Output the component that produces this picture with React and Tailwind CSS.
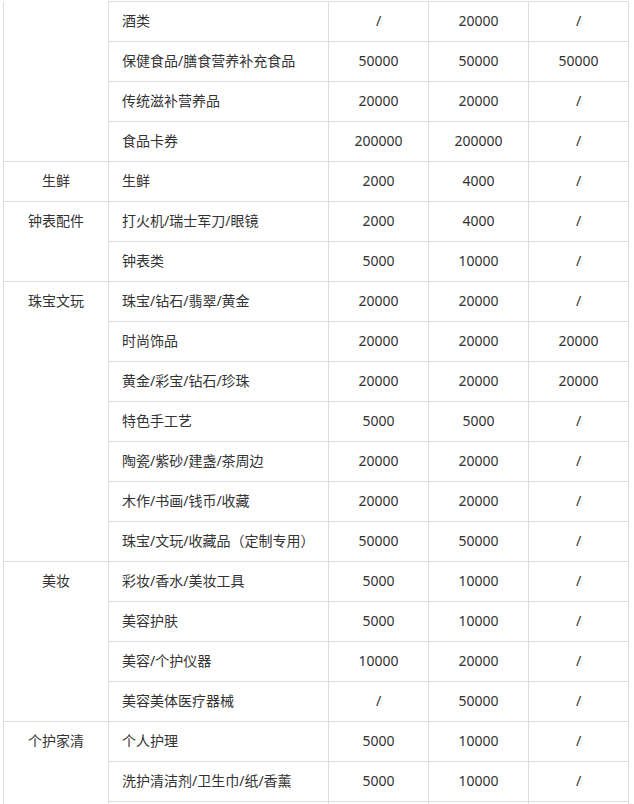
const groups = [
  {
    name: "",
    cont: true,
    rows: [
      ["酒类", "/", "20000", "/"],
      ["保健食品/膳食营养补充食品", "50000", "50000", "50000"],
      ["传统滋补营养品", "20000", "20000", "/"],
      ["食品卡券", "200000", "200000", "/"],
    ],
  },
  { name: "生鲜", rows: [["生鲜", "2000", "4000", "/"]] },
  {
    name: "钟表配件",
    rows: [
      ["打火机/瑞士军刀/眼镜", "2000", "4000", "/"],
      ["钟表类", "5000", "10000", "/"],
    ],
  },
  {
    name: "珠宝文玩",
    rows: [
      ["珠宝/钻石/翡翠/黄金", "20000", "20000", "/"],
      ["时尚饰品", "20000", "20000", "20000"],
      ["黄金/彩宝/钻石/珍珠", "20000", "20000", "20000"],
      ["特色手工艺", "5000", "5000", "/"],
      ["陶瓷/紫砂/建盏/茶周边", "20000", "20000", "/"],
      ["木作/书画/钱币/收藏", "20000", "20000", "/"],
      ["珠宝/文玩/收藏品（定制专用）", "50000", "50000", "/"],
    ],
  },
  {
    name: "美妆",
    rows: [
      ["彩妆/香水/美妆工具", "5000", "10000", "/"],
      ["美容护肤", "5000", "10000", "/"],
      ["美容/个护仪器", "10000", "20000", "/"],
      ["美容美体医疗器械", "/", "50000", "/"],
    ],
  },
  {
    name: "个护家清",
    rows: [
      ["个人护理", "5000", "10000", "/"],
      ["洗护清洁剂/卫生巾/纸/香薰", "5000", "10000", "/"],
      ["", "", "", ""],
    ],
  },
];

const cell = "border border-[#dddddd] h-[40px] p-0 pb-[2px]";

export default function App() {
  return (
    <div
      className="bg-white pl-[3px] pt-px h-[804px] overflow-hidden text-[14px] text-[#333333]"
      style={{ fontFamily: '"Noto Sans", "Noto Sans CJK SC", sans-serif' }}
    >
      <table className="border-collapse table-fixed w-[626px]">
        <colgroup>
          <col className="w-[105px]" />
          <col className="w-[220px]" />
          <col className="w-[100px]" />
          <col className="w-[100px]" />
          <col className="w-[100px]" />
        </colgroup>
        <tbody>
          {groups.map((g, gi) =>
            g.rows.map((r, ri) => (
              <tr key={`${gi}-${ri}`}>
                {ri === 0 && (
                  <td
                    rowSpan={g.rows.length}
                    className={`border border-[#dddddd] p-0 align-top text-center ${g.cont ? "border-t-0" : ""}`}
                  >
                    <div className="h-[37px] flex items-center justify-center">{g.name}</div>
                  </td>
                )}
                <td className={`${cell} pl-[13px] text-left align-middle`}>{r[0]}</td>
                <td className={`${cell} text-center align-middle`}>{r[1]}</td>
                <td className={`${cell} text-center align-middle`}>{r[2]}</td>
                <td className={`${cell} text-center align-middle`}>{r[3]}</td>
              </tr>
            ))
          )}
        </tbody>
      </table>
    </div>
  );
}
